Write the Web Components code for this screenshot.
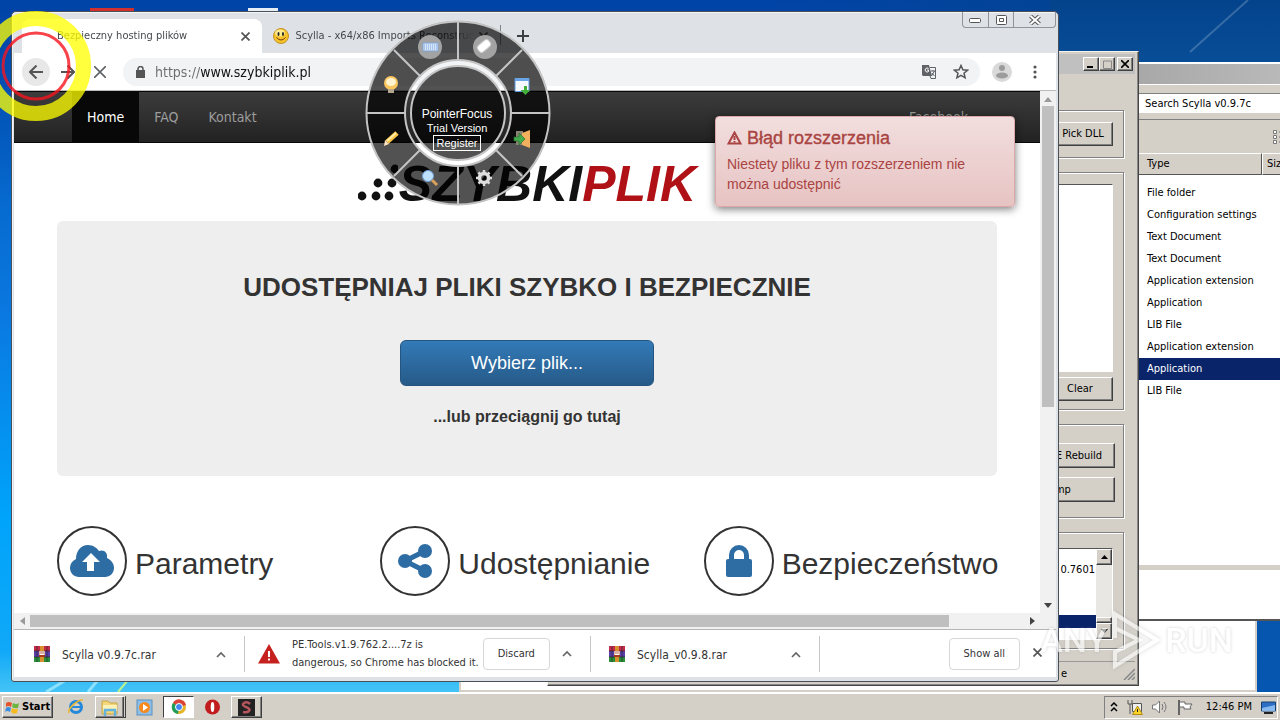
<!DOCTYPE html>
<html lang="pl">
<head>
<meta charset="utf-8">
<meta name="viewport" content="width=device-width, initial-scale=1">
<title>Bezpieczny hosting plików</title>
<style>
	html, body{ height: 100%; margin: 0; overflow: hidden; }
	body{
		--ui: "DejaVu Sans Condensed", "DejaVu Sans", sans-serif;
		--web: "Liberation Sans", Arial, sans-serif;
		--face: #d4d0c8;
		font: 11px/14px var(--ui);
		color: #000;
	}
</style>
</head>
<body>
<desk-top>
	<back-window></back-window>
	<explorer-window></explorer-window>
	<scylla-window></scylla-window>
	<browser-window>
		<browser-tab slot="tabs" active>Bezpieczny hosting plików</browser-tab>
		<browser-tab slot="tabs">Scylla - x64/x86 Imports Reconstruction</browser-tab>
		<host-page></host-page>
		<download-item slot="shelf" icon="rar">Scylla v0.9.7c.rar</download-item>
		<download-item slot="shelf" icon="warn" wide>PE.Tools.v1.9.762.2....7z is<br>dangerous, so Chrome has blocked it.</download-item>
		<download-item slot="shelf" icon="rar">Scylla_v0.9.8.rar</download-item>
	</browser-window>
	<radial-menu></radial-menu>
	<pointer-halo></pointer-halo>
	<water-mark></water-mark>
	<task-bar slot="bar"></task-bar>
</desk-top>

<script>
const define = (name, html, setup) => {
	customElements.define(name, class extends HTMLElement{
		constructor(){
			super();
			this.attachShadow({mode:'open'}).innerHTML = html;
		}
		connectedCallback(){ if(setup) setup(this, this.shadowRoot); }
	});
};

const ICONS = {
	rar: `<svg width="16" height="16" viewBox="0 0 16 16"><path fill="#c22b4a" d="M0 0h16v5H0z"/><path fill="#5b3fa8" d="M0 5h16v6H0z"/><path fill="#2a8f3a" d="M0 11h16v5H0z"/><path stroke="#222" stroke-width=".6" d="M0 5h16M0 11h16M3 0v16M13 0v16"/><path fill="#d8902c" d="M6 0h4v16H6z"/><path fill="#a33a1c" d="M5 5h6v6H5z"/><path stroke="#fff" stroke-width="1.2" fill="none" d="M6 5v3.500h4V5M8 5v3"/></svg>`,
	warn: `<svg width="22" height="20" viewBox="0 0 22 20"><path fill="#c5221f" d="M11 0l11 19.500H0z"/><path fill="#fff" d="M10 7h2v6h-2zM10 14.500h2v2h-2z"/></svg>`,
	up: `<svg width="10" height="7" viewBox="0 0 10 7"><path fill="none" stroke="#666" stroke-width="1.700" d="M1 6l4-4 4 4"/></svg>`,
	close: `<svg width="9" height="9" viewBox="0 0 9 9"><path stroke="#555" stroke-width="1.700" d="M.5.5l8 8M8.500.5l-8 8"/></svg>`,
	cloud: `<svg width="44" height="32" viewBox="0 0 44 32"><path fill="#2e6da4" d="M9 32C4 32 0 28 0 23c0-4 2-7 6-9C6 6 11 0 18 0c5 0 9 3 11 6 5-2 9 2 8 7 4 2 7 5 7 10s-4 9-9 9z"/><path fill="#fff" d="M21 8l9 9h-6v9h-7v-9h-5z"/></svg>`,
	share: `<svg width="34" height="34" viewBox="0 0 34 34"><g fill="#2e6da4"><circle cx="7" cy="17" r="7"/><circle cx="27" cy="7" r="7"/><circle cx="27" cy="27" r="7"/></g><path stroke="#2e6da4" stroke-width="5" fill="none" d="M27 7L7 17l20 10"/></svg>`,
	lock: `<svg width="26" height="32" viewBox="0 0 26 32"><rect y="14" width="26" height="18" rx="2" fill="#2e6da4"/><path fill="none" stroke="#2e6da4" stroke-width="5" d="M5.500 15V10a7.500 7.500 0 0 1 15 0v5"/></svg>`
};

define('desk-top', `
	<style>
		:host{ display: flex; flex-direction: column; height: 100vh; overflow: hidden; }
		.space{
			position: relative;
			flex: 1;
			background:
				linear-gradient(90deg, #0000 0, #0000 60%, #064389 100%) top / 100% 70px no-repeat,
				linear-gradient(180deg, #003a9f99 0, #0000 200px),
				linear-gradient(180deg, #0050b0 0, #0a78e0 45%, #00a4fb 75%, #10a8f8 94%, #45c4f5 100%);
		}
		.right{ position: absolute; right: 0; top: 0; width: 230px; height: 100%; background: linear-gradient(180deg, #03438c 0, #0a519b 12%, #0556b0 100%); }
		svg{ position: absolute; left: 0; top: 0; width: 100%; height: 100%; }
	</style>
	<div class="space">
		<div class="right"></div>
		<svg>
			<rect x="90" y="8" width="44" height="4" fill="#d2302c"/>
			<rect x="248" y="8" width="30" height="4" fill="#e8eef5"/>
			<path stroke="#fff" stroke-opacity=".2" stroke-width="2" d="M1248 0L1190 52"/>
			<path stroke="#dff" stroke-opacity=".5" stroke-width="3" d="M46 692l20-12M88 692l10-12"/>
			<path stroke="#df7" stroke-opacity=".8" stroke-width="2" d="M118 692l10-12"/>
		</svg>
		<slot></slot>
	</div>
	<slot name="bar"></slot>
`);

define('back-window', `
	<style>
		:host{
			position: absolute; left: 459px; right: 23px; top: 90px; bottom: 0;
			box-sizing: border-box;
			background: #fff;
			border: solid #d4d0c8;
			border-width: 0 2px 2px 2px;
		}
	</style>
`);

define('explorer-window', `
	<style>
		:host{
			position: absolute; right: -60px; top: 62px; bottom: 71px; width: 202px;
			box-sizing: border-box;
			display: flex; flex-direction: column;
			background: var(--face);
			border-top: 2px solid #fff;
			border-bottom: 2px solid #555;
		}
		.title{ height: 20px; background: linear-gradient(90deg, #a8a8a8, #c0c0c0); }
		.search{ padding: 8px 0 6px; border-top: 1px solid #fff; }
		input{
			width: 100%; height: 20px; box-sizing: border-box;
			border: 1px solid #808080; border-bottom-color: #fff;
			padding: 0 6px;
			font: inherit;
		}
		input::placeholder{ color: #000; opacity: 1; }
		.tools{ height: 33px; border-top: 1px solid #808080; display: flex; align-items: center; justify-content: end; padding-right: 57px; }
		.list{ flex: 1; background: #fff; overflow: hidden; }
		table{ border-spacing: 0; width: 100%; table-layout: fixed; }
		th{
			height: 22px; box-sizing: border-box; padding: 0 5px 0 8px;
			font-weight: normal; text-align: left;
			background: var(--face);
			border: 1px solid; border-color: #fff #555 #555 #fff;
		}
		th + th{ padding-left: 4px; }
		td{ height: 22px; padding: 0 9px; white-space: nowrap; }
		.gap td{ height: 7px; padding: 0; }
		.on td{ background: #0a246a; color: #fff; }
		.info{ height: 49px; border-top: 5px solid var(--face); background: #fff; }
	</style>
	<div class="title"></div>
	<div class="search"><input type="search" placeholder="Search Scylla v0.9.7c" aria-label="Search"></div>
	<div class="tools">
		<svg width="10" height="14"><path fill="#fff" stroke="#777" d="M.5.5h3v3h-3zM.5 5.500h3v3h-3zM.5 10.500h3v3h-3z"/><path stroke="#777" d="M6 2h4M6 7h4M6 12h4"/></svg>
	</div>
	<div class="list">
		<table>
			<colgroup><col width="124"><col></colgroup>
			<thead><tr><th>Type</th><th>Size</th></tr></thead>
			<tbody><tr class="gap"><td colspan="2"></td></tr></tbody>
		</table>
	</div>
	<div class="info"></div>
`, (el, root) => {
	const types = ['File folder','Configuration settings','Text Document','Text Document','Application extension','Application','LIB File','Application extension','Application','LIB File'];
	root.querySelector('tbody').insertAdjacentHTML('beforeend', types.map((t, i) =>
		`<tr${i === 8 ? ' class="on"' : ''}><td>${t}</td><td></td></tr>`).join(''));
});

define('scylla-window', `
	<style>
		:host{
			position: absolute; left: 547px; right: 141px; top: 51px; bottom: 6px;
			box-sizing: border-box;
			display: flex; flex-direction: column;
			background: var(--face);
			border: 1px solid; border-color: #f4f2ee #444 #444 #f4f2ee;
			box-shadow: inset -1px -1px #888;
		}
		.title{ margin: 2px 3px 0; height: 20px; display: flex; justify-content: end; align-items: center; background: #c0c0c0; }
		.title button{ width: 16px; height: 14px; padding: 0; display: grid; place-items: center; }
		.title button:last-child{ margin: 0 2px; }
		button{
			font: inherit;
			box-sizing: border-box;
			background: var(--face);
			border: 1px solid; border-color: #fff #404040 #404040 #fff;
			box-shadow: inset -1px -1px #808080;
		}
		section{
			box-sizing: border-box;
			margin: 0 14px 14px;
			border: 1px solid #808080;
			box-shadow: 1px 1px #fff, inset 1px 1px #fff;
			display: flex; flex-direction: column; align-items: flex-end;
			gap: 5px;
			padding: 11px 10px 8px;
		}
		.pick{ margin-top: 36px; height: 48px; }
		.pick button{ width: 60px; height: 24px; padding: 0; }
		.imports{ height: 238px; }
		.list{ align-self: stretch; flex: 1; background: #fff; border: 1px solid #555; border-color: #555 #fff #fff #555; }
		.imports button{ width: 66px; height: 24px; }
		.dump{ height: 94px; gap: 9px; padding: 18px 8px 0; }
		.dump button{ height: 25px; width: 78px; }
		.dump button:last-child{ width: 108px; padding-right: 16px; }
		.log{ height: 117px; margin-bottom: 12px; padding-top: 15px; }
		.rows{ display: flex; }
		.rows div:first-child{ flex: 1; text-align: right; }
		.lines p{ margin: 0; height: 13px; padding-right: 1px; }
		.lines p.on{ background: #0a246a; }
		.lines{ padding-top: 14px; }
		.bar{ width: 16px; background: #e9e7e3; display: flex; flex-direction: column; }
		.bar i{ flex: 1; }
		.bar button{ height: 16px; width: 16px; padding: 0; display: grid; place-items: center; }
		.bar .thumb{ height: 6px; }
		.status{ flex: 1; border-top: 1px solid #999; margin: 0 3px; display: flex; justify-content: end; align-items: center; gap: 56px; }
	</style>
	<div class="title">
		<button aria-label="Minimize"><svg width="8" height="8"><path stroke="#000" stroke-width="2" d="M0 7h6"/></svg></button>
		<button aria-label="Maximize"><svg width="9" height="9"><path fill="none" stroke="#888" d="M.5 1h8v7.500h-8z"/></svg></button>
		<button aria-label="Close"><svg width="8" height="8"><path stroke="#000" stroke-width="1.600" d="M0 0l8 8M8 0L0 8"/></svg></button>
	</div>
	<section class="pick"><button>Pick DLL</button></section>
	<section class="imports"><div class="list"></div><button>Clear</button></section>
	<section class="dump"><button>PE Rebuild</button><button>Dump</button></section>
	<section class="log">
		<div class="list rows">
			<div class="lines"><p>0.7601</p><p></p><p></p><p></p><p class="on"></p></div>
			<div class="bar">
				<button aria-label="Up"><svg width="7" height="4"><path d="M0 4l3.500-4L7 4z"/></svg></button>
				<i></i>
				<button class="thumb" aria-label="Scroll"></button>
				<button aria-label="Down"><svg width="7" height="4"><path d="M0 0l3.500 4L7 0z"/></svg></button>
			</div>
		</div>
	</section>
	<div class="status"><span>e</span><svg width="12" height="12"><path stroke="#888" stroke-width="1.500" d="M1 12L12 1M5 12l7-7M9 12l3-3"/></svg></div>
`);

define('browser-window', `
	<style>
		:host{
			position: absolute; left: 11px; right: 221px; top: 11px; bottom: 10px;
			box-sizing: border-box;
			display: flex; flex-direction: column;
			padding: 0 2px 4px;
			background: #dee1e6;
			border: 1px solid #4a5058;
			border-radius: 5px 5px 3px 3px;
			box-shadow: inset 1px 1px #f3f5f7;
		}
		button{ border: 0; padding: 0; background: none; font: inherit; color: inherit; }
		.strip{ display: flex; height: 41px; padding-left: 8px; align-items: flex-end; }
		.tabs{ display: flex; flex: 0 1 479px; min-width: 0; height: 34px; }
		.add{ margin: 0 0 11px 16px; display: flex; }
		.caption{ margin-left: auto; align-self: flex-start; display: flex; border: 1px solid #8d949c; border-top: 0; border-radius: 0 0 4px 4px; }
		.caption button{ width: 25px; height: 15px; display: grid; place-items: center; }
		.caption button + button{ border-left: 1px solid #8d949c; }
		.caption button:last-child{ width: 42px; }
		.bar{ display: flex; align-items: center; height: 37px; padding: 0 13px 0 8px; background: #fff; border-bottom: 1px solid #b8babd; }
		.bar > button{ width: 28px; height: 28px; margin-right: 4px; border-radius: 50%; display: grid; place-items: center; flex: none; }
		.bar .back{ background: #e8e8e8; }
		.url{ flex: 1; display: flex; align-items: center; height: 28px; margin: 0 12px 0 5px; padding: 0 11px 0 13px; border-radius: 14px; background: #f1f3f4; }
		.url svg{ flex: none; }
		.url input{
			flex: 1; min-width: 0; border: 0; outline: 0; margin-left: 10px; padding: 0;
			font: 14px/20px var(--ui);
			background: linear-gradient(90deg, #6a6d70 46px, #111 46px);
			-webkit-background-clip: text; background-clip: text;
			color: transparent;
		}
		.url svg + svg{ margin-left: 17px; }
		.view{ flex: 1; min-height: 0; display: grid; grid-template: minmax(0, 1fr) 16px / minmax(0, 1fr) 16px; background: #f1f1f1; }
		.page{ background: #fff; overflow: hidden; }
		.sv, .sh{ display: flex; align-items: center; }
		.sv{ flex-direction: column; padding: 6px 0 5px; }
		.sv i{ flex: 0 0 59%; margin: 4px 0 auto; width: 12px; background: #bfbfbf; }
		.sh{ padding: 0 5px 0 6px; }
		.sh i{ flex: 0 0 90.500%; margin: 0 auto 0 5px; height: 12px; background: #bfbfbf; }
		.shelf{ display: flex; align-items: center; height: 47px; padding-left: 2px; background: #fff; border-top: 1px solid #b5b5b5; }
		.all{ margin-left: auto; height: 32px; padding: 0 14px; border: 1px solid #d5d7da; border-radius: 4px; color: #333; }
		.shut{ margin: 0 14px 0 13px; }
	</style>
	<div class="strip">
		<div class="tabs"><slot name="tabs"></slot></div>
		<button class="add" aria-label="New tab"><svg width="12" height="12"><path stroke="#3c4043" stroke-width="2" d="M6 0v12M0 6h12"/></svg></button>
		<div class="caption">
			<button aria-label="Minimize"><svg width="13" height="7"><rect x=".5" y="2.500" width="11" height="4" rx="1" fill="#fff" stroke="#555"/></svg></button>
			<button aria-label="Maximize"><svg width="11" height="10"><rect x=".5" y=".5" width="10" height="9" rx="1" fill="#fff" stroke="#555"/><path fill="none" stroke="#555" d="M3.500 3.500h4v3h-4z"/></svg></button>
			<button aria-label="Close"><svg width="12" height="10"><path stroke="#555" stroke-width="4" d="M1.500 1l9 8M10.500 1l-9 8"/><path stroke="#fff" stroke-width="2" d="M1.500 1l9 8M10.500 1l-9 8"/></svg></button>
		</div>
	</div>
	<div class="bar">
		<button class="back" aria-label="Back"><svg width="14" height="14"><path fill="none" stroke="#555" stroke-width="2" d="M14 7H1M7.500.5L1 7l6.500 6.500"/></svg></button>
		<button aria-label="Forward"><svg width="14" height="14"><path fill="none" stroke="#555" stroke-width="2" d="M0 7h13M6.500.5L13 7l-6.500 6.500"/></svg></button>
		<button aria-label="Stop"><svg width="12" height="12"><path stroke="#5f6368" stroke-width="1.600" d="M0 0l12 12M12 0L0 12"/></svg></button>
		<div class="url">
			<svg width="9" height="12"><path fill="#555" d="M0 4h9v8H0z"/><path fill="none" stroke="#555" stroke-width="1.500" d="M2 5V3a2.500 2.500 0 0 1 5 0v2"/></svg>
			<input value="https://www.szybkiplik.pl" aria-label="Address" spellcheck="false">
			<svg width="14" height="14"><path fill="#5f6368" d="M0 0h7l3 11H1L0 10z"/><path fill="none" stroke="#5f6368" d="M8 2.500h5.500v11H9L8 11"/><path fill="none" stroke="#fff" d="M6.500 3.500a2 2 0 1 0 0 3V5H5"/><path stroke="#5f6368" d="M9 6h4M11 5v1M12.500 6l-3 5M10 8l2.500 3"/></svg>
			<svg width="16" height="16" viewBox="0 0 16 16"><path fill="none" stroke="#555" stroke-width="1.500" d="M8 1.500l1.900 4.300 4.600.4-3.500 3 1.100 4.600L8 11.400l-4.100 2.400L5 9.200l-3.500-3 4.600-.4z"/></svg>
		</div>
		<svg width="20" height="20"><circle cx="10" cy="10" r="10" fill="#d9d9d9"/><circle cx="10" cy="6" r="3" fill="#9c9c9c"/><ellipse cx="10" cy="13.500" rx="6" ry="3" fill="#9c9c9c"/></svg>
		<svg width="31" height="14"><g fill="#555"><circle cx="23" cy="2" r="1.600"/><circle cx="23" cy="7" r="1.600"/><circle cx="23" cy="12" r="1.600"/></g></svg>
	</div>
	<div class="view">
		<div class="page"><slot></slot></div>
		<div class="sv">
			<svg width="8" height="5"><path fill="#999" d="M0 5l4-5 4 5z"/></svg><i></i><svg width="8" height="5"><path fill="#444" d="M0 0l4 5 4-5z"/></svg>
		</div>
		<div class="sh">
			<svg width="5" height="8"><path fill="#999" d="M5 0L0 4l5 4z"/></svg><i></i><svg width="5" height="8"><path fill="#444" d="M0 0l5 4-5 4z"/></svg>
		</div>
	</div>
	<div class="shelf">
		<slot name="shelf"></slot>
		<button class="all">Show all</button>
		<button class="shut" aria-label="Close">${ICONS.close}</button>
	</div>
`);

define('browser-tab', `
	<style>
		:host{
			flex: 1 1 0; min-width: 0;
			display: flex; align-items: center;
			padding: 0 12px 0 11px;
			color: #45494d;
			border-right: 1px solid #80868b;
			border-image: linear-gradient(#0000 20%, #80868b 20%, #80868b 75%, #0000 75%) 1;
		}
		:host([active]){ background: #fff; border: 0; border-radius: 8px 8px 0 0; padding-left: 12px; }
		svg{ flex: none; }
		.face{ margin-right: 7px; }
		:host([active]) .face{ visibility: hidden; }
		.label{ flex: 1; overflow: hidden; white-space: nowrap; -webkit-mask: linear-gradient(90deg, #000 85%, #0000); mask: linear-gradient(90deg, #000 85%, #0000); }
		button{ border: 0; padding: 0; margin-left: 4px; background: none; display: flex; }
	</style>
	<svg class="face" width="16" height="16"><circle cx="8" cy="8" r="7.500" fill="#f5c32c" stroke="#c4912a"/><ellipse cx="7" cy="5" rx="5" ry="3.500" fill="#fde98e"/><ellipse cx="5.500" cy="6" rx="1" ry="2" fill="#222"/><ellipse cx="10" cy="6" rx="1" ry="2" fill="#222"/><path fill="none" stroke="#7a3b10" d="M3.500 9.500q4.500 5 9 0"/></svg>
	<span class="label"><slot></slot></span>
	<button aria-label="Close tab">${ICONS.close}</button>
`);

define('download-item', `
	<style>
		:host{ display: flex; align-items: center; flex: 0 0 229px; height: 36px; box-sizing: border-box; padding: 0 18px; border-right: 1px solid #c6c6c6; color: #333; font-size: 12px; line-height: 16px; }
		:host([wide]){ flex-basis: 346px; padding-left: 13px; font-size: 11px; line-height: 18px; }
		.icon{ display: flex; margin-right: 12px; }
		button{ border: 0; padding: 0; background: none; font: inherit; color: inherit; }
		.discard{ display: none; flex: none; height: 32px; padding: 0 14px; margin-left: 4px; border: 1px solid #d5d7da; border-radius: 4px; line-height: 14px; }
		:host([wide]) .discard{ display: block; }
		.more{ margin-left: auto; }
		span{ white-space: nowrap; padding-top: 2px; }
		:host([wide]) span{ padding: 0; }
	</style>
	<div class="icon"></div>
	<span><slot></slot></span>
	<button class="discard">Discard</button>
	<button class="more" aria-label="More">${ICONS.up}</button>
`, (el, root) => { root.querySelector('.icon').innerHTML = ICONS[el.getAttribute('icon')]; });

define('host-page', `
	<style>
		:host{ display: block; position: relative; font: 14px/20px var(--web); color: #333; }
		nav{
			display: flex; align-items: center;
			height: 50px; padding: 0 57px 0 58px;
			background: linear-gradient(#3c3c3c, #222);
			border: solid #080808; border-width: 1px 0;
		}
		nav a{ padding: 15px; color: #9d9d9d; text-decoration: none; font-family: var(--ui); font-size: 14px; }
		nav a.on{ color: #fff; background: #080808; }
		nav a:last-child{ margin-left: auto; }
		.wrap{ max-width: 940px; margin: 0 auto; padding: 0 15px; }
		.logo{ display: flex; justify-content: center; align-items: flex-start; gap: 1px; margin: 14px 0 9px; font: italic bold 50px/55px var(--web); color: #111; }
		.logo b{ color: #b01116; }
		.drop{
			box-sizing: border-box; min-height: 255px; padding: 48px 20px;
			display: flex; flex-direction: column; align-items: center;
			background: #eee; border-radius: 6px;
		}
		h1{ margin: 0; font-size: 26px; line-height: 36px; font-weight: bold; }
		.drop button{
			width: 254px; height: 46px; margin: 35px 0 21px;
			border: 1px solid #245580; border-radius: 6px;
			background: linear-gradient(#337ab7, #265a88);
			color: #fff; font: 18px/24px var(--web);
		}
		.drop p{ margin: 0; font-size: 16px; font-weight: bold; }
		.features{ display: grid; grid-template-columns: repeat(3, 1fr); margin: 50px -15px 0; padding: 0; }
		aside{
			position: absolute; right: 25px; top: 25px; width: 300px;
			box-sizing: border-box; padding: 11px 11px 12px;
			color: #a94442;
			background: linear-gradient(#f2dede, #e7c3c3);
			border: 1px solid #dca7a7; border-radius: 4px;
			box-shadow: 0 2px 8px #0008;
		}
		aside h2{ margin: 0 0 6px; display: flex; align-items: center; gap: 5px; font-size: 18px; line-height: 20px; font-weight: normal; -webkit-text-stroke: thin #a94442; }
		aside p{ margin: 0; }
	</style>
	<nav>
		<a class="on" href="#home">Home</a><a href="#faq">FAQ</a><a href="#kontakt">Kontakt</a><a href="#facebook">Facebook</a>
	</nav>
	<div class="wrap">
		<div class="logo">
			<svg width="40" height="44"><g fill="#111"><circle cx="4" cy="39" r="4.400"/><circle cx="18" cy="39" r="4.400"/><circle cx="31" cy="39" r="4.400"/><circle cx="20" cy="26" r="4.400"/><circle cx="34" cy="26" r="4.400"/><circle cx="37" cy="12" r="4.400"/></g></svg>
			<span>SZYBKI<b>PLIK</b></span>
		</div>
		<div class="drop">
			<h1>UDOSTĘPNIAJ PLIKI SZYBKO I BEZPIECZNIE</h1>
			<button>Wybierz plik...</button>
			<p>...lub przeciągnij go tutaj</p>
		</div>
		<div class="features">
			<feature-item icon="cloud">Parametry</feature-item>
			<feature-item icon="share">Udostępnianie</feature-item>
			<feature-item icon="lock">Bezpieczeństwo</feature-item>
		</div>
	</div>
	<aside role="alert">
		<h2><svg width="15" height="14" viewBox="0 0 15 14"><path fill="none" stroke="#a94442" stroke-width="2" d="M7.500 1.500l6 11h-12z"/><path fill="#a94442" d="M6.500 5h2v4h-2zM6.500 10h2v1.500h-2z"/></svg>Błąd rozszerzenia</h2>
		<p>Niestety pliku z tym rozszerzeniem nie można udostępnić</p>
	</aside>
`);

define('feature-item', `
	<style>
		:host{ display: flex; align-items: center; gap: 8px; padding-left: 15px; font: 30px/36px var(--web); color: #333; }
		.ring{ flex: none; width: 66px; height: 66px; border: 2px solid #333; border-radius: 50%; display: grid; place-items: center; }
		h3{ margin: 6px 0 0; font: inherit; }
	</style>
	<div class="ring"></div>
	<h3><slot></slot></h3>
`, (el, root) => { root.querySelector('.ring').innerHTML = ICONS[el.getAttribute('icon')]; });

define('radial-menu', `
	<style>
		:host{ position: absolute; left: 365px; top: 20px; width: 186px; height: 186px; display: grid; color: #fff; }
		:host > *, svg{ grid-area: 1 / 1; }
		.hub{ grid-area: 1 / 1; display: flex; flex-direction: column; align-items: center; padding: 87px 2px 0 0; font: 11px/14px var(--web); }
		.hub .name{ font-size: 12px; }
		button{ height: 16px; border: 1px solid #fff; background: none; color: #fff; font: 11px/14px var(--web); padding: 0 3px; }
	</style>
	<svg width="186" height="186" viewBox="-93 -93 186 186">
		<circle r="72.500" fill="none" stroke="#000" stroke-opacity=".68" stroke-width="39"/>
		<circle r="47" fill="#000" fill-opacity=".68"/>
		<g fill="none" stroke="#c4c4c4" stroke-width="2">
			<circle r="91.500"/><circle r="53"/><circle r="47"/>
			<path d="M0-92V-53M0 92V53M-92 0H-53M92 0H53M-64-63L-38-37M64-63L38-37M-64 63L-38 37M64 63L38 37"/>
		</g>
		<g fill="#a3a3a3"><circle cx="-28" cy="-66" r="12"/><circle cx="27" cy="-66" r="12"/></g>
		<path fill="#d5e6fa" stroke="#7ea4d8" d="M-35-70h15v8h-15z"/><path stroke="#7ea4d8" stroke-dasharray="1 1" d="M-34-68h13M-34-66h13M-34-64h13"/>
		<rect x="-7" y="-4" width="14" height="8" rx="3" fill="#fff" stroke="#ccc" transform="translate(26 -67) rotate(-40)"/>
		<circle cx="-67" cy="-30" r="7" fill="#fcc65e"/><ellipse cx="-67" cy="-31" rx="5" ry="4" fill="#fff3cf"/><path fill="#b5a78c" d="M-70-24h6v4h-6z"/>
		<path fill="#f4f9ff" stroke="#5d97d8" d="M57-34.500h14v13H57z"/><path fill="#6aa5e5" d="M57-35h14v3H57z"/><path fill="#42b038" d="M66-27h3v4h3l-4.500 5-5-5H66z"/>
		<path stroke="#f9c440" stroke-width="5" d="M-61 20l-10 9"/><path stroke="#ffe9a6" stroke-width="2" d="M-62 20l-9 8"/><path fill="#fde3c0" d="M-69 31l-5 2 1-6z"/>
		<path fill="#8a8272" d="M58 18h7v14h-7z"/><path fill="#f0b05e" d="M64 20l8-3v18l-8-3z"/><path fill="#43ad4b" stroke="#236d2c" stroke-width=".7" d="M56 24h5v-4l6 6-6 6v-4h-5z"/>
		<circle cx="-30" cy="63" r="5.500" fill="#bfe0fc" stroke="#6e9fd6"/><path stroke="#d8a05b" stroke-width="3" d="M-26 67l5 5"/>
		<g transform="translate(26 65)"><circle r="4.500" fill="none" stroke="#ddd" stroke-width="3.500"/><path stroke="#ddd" stroke-width="2.500" d="M0-8v3M0 5v3M-8 0h3M5 0h3M-5.500-5.500l2 2M5.500-5.500l-2 2M-5.500 5.500l2-2M5.500 5.500l-2-2"/></g>
	</svg>
	<div class="hub">
		<span class="name">PointerFocus</span><span>Trial Version</span>
		<button>Register</button>
	</div>
`);

define('pointer-halo', `
	<style>
		:host{ position: absolute; left: -20px; top: 10px; pointer-events: none; }
		svg{ display: block; }
	</style>
	<svg width="112" height="112" viewBox="-56 -56 112 112">
		<circle r="47.500" fill="none" stroke="#ff0" stroke-opacity=".76" stroke-width="15"/>
		<circle r="33" fill="none" stroke="#f8141e" stroke-opacity=".8" stroke-width="3"/>
	</svg>
`);

define('water-mark', `
	<style>
		:host{ position: absolute; right: 47px; bottom: 22px; display: flex; align-items: center; gap: 2px; opacity: .65; color: #fff; font: 500 34px/60px Roboto, sans-serif; text-shadow: 0 0 3px #8889; pointer-events: none; }
		svg{ filter: drop-shadow(0 0 2px #8888); }
	</style>
	<span>ANY</span>
	<svg width="54" height="60" viewBox="0 0 54 60"><path fill="#fff3" stroke="#fff" stroke-width="4" d="M6 28V4l42 26L6 56V42l24-12L6 18"/></svg>
	<span>RUN</span>
`);

define('task-bar', `
	<style>
		:host{ display: flex; align-items: center; height: 28px; box-sizing: border-box; border-top: 2px solid #fff; background: var(--face); padding: 0 2px; }
		button{ height: 22px; padding: 0 3px; display: flex; align-items: center; gap: 2px; border: 1px solid #0000; background: none; font: inherit; }
		.start, .up{ border-color: #fff #404040 #404040 #fff; box-shadow: inset -1px -1px #808080; }
		.start{ font-weight: bold; margin-right: 8px; padding: 0 2px; }
		.items{ display: flex; gap: 3px; }
		.items button{ width: 31px; justify-content: center; }
		.up.many{ border-right: 3px double #404040; }
		.down{ background: #fff; border-color: #404040 #fff #fff #404040; }
		.tray{ margin-left: auto; height: 21px; display: flex; align-items: center; gap: 9px; padding: 0 1px 0 5px; border: 1px solid; border-color: #808080 #fff #fff #808080; }
		time{ margin-left: 4px; }
	</style>
	<button class="start"><svg width="15" height="16"><path fill="#e5532d" d="M1 4q3-2 6 0L6 8q-3-2-5 0z"/><path fill="#6cb33f" d="M8 4q3 2 6 0l-1 5q-3 1-6-1z"/><path fill="#3b8ede" d="M1 9q2-2 5 0l-1 4q-3-2-5 0z"/><path fill="#f8bb1e" d="M7 9q3 2 6 1l-1 4q-3 2-6-1z"/></svg>Start</button>
	<div class="items">
		<button aria-label="Internet Explorer"><svg width="17" height="16"><circle cx="8" cy="8" r="5.500" fill="none" stroke="#2588d8" stroke-width="3"/><path stroke="#2588d8" stroke-width="2" d="M4 8h9"/><path fill="none" stroke="#eab52f" stroke-width="1.500" d="M1 14C-1 10 10 0 15 1"/></svg></button>
		<button class="up many" aria-label="Explorer"><svg width="18" height="17"><path fill="#f3d679" stroke="#c9a442" d="M1 2h6l2 2h7v11H1z"/><path fill="#fdf2b5" d="M2 6h14v6H2z"/><path fill="none" stroke="#63b4dd" stroke-width="2.500" d="M4 17v-6h10v6"/></svg></button>
		<button aria-label="Media Player"><svg width="17" height="17"><rect x="1" y="1" width="15" height="15" fill="#8dbfe8" stroke="#5a8fc0"/><circle cx="8.500" cy="8.500" r="5.500" fill="#f58a1f"/><path fill="#fff" d="M7 5l5 3.500L7 12z"/></svg></button>
		<button class="down" aria-label="Chrome"><svg width="16" height="16"><circle cx="8" cy="8" r="7" fill="#e8b526"/><path fill="#dc4437" d="M8 8L2 4a7 7 0 0 1 13 2z"/><path fill="#1e9e58" d="M8 8L2 4a7 7 0 0 0 5 11z"/><circle cx="8" cy="8" r="3.500" fill="#4387f4" stroke="#fff"/></svg></button>
		<button aria-label="Opera"><svg width="15" height="16"><ellipse cx="7.500" cy="8" rx="7.500" ry="7.500" fill="#c11c1e"/><ellipse cx="7.500" cy="8" rx="1.800" ry="5" fill="#fff"/></svg></button>
		<button class="up" aria-label="Scylla"><svg width="17" height="17"><path fill="#222" d="M0 0h17v17H0z"/><path fill="none" stroke="#b5555c" stroke-width="2.500" d="M12 5Q9 2 6 4t2 4 3 4-6 1"/></svg></button>
	</div>
	<div class="tray">
		<svg width="8" height="10"><path fill="none" stroke="#000" stroke-width="1.500" d="M1 4l3-3 3 3M1 9l3-3 3 3"/></svg>
		<svg width="16" height="16"><path fill="#eee" stroke="#555" d="M5.500 4.500h9v8h-9z"/><path fill="none" stroke="#555" d="M1 1v4h4V1M3 5v10"/><path fill="#fbd42a" stroke="#b18c10" d="M10.500 7l5 8.500h-10z"/><path stroke="#222" d="M10.500 10v3"/></svg>
		<svg width="16" height="14"><path fill="#fff" stroke="#777" d="M.5 5h3l4-4v12l-4-4h-3z"/><path fill="none" stroke="#777" d="M10 4q2 3 0 6M12 2q4 5 0 10"/></svg>
		<svg width="16" height="15"><path fill="#fff" stroke="#666" d="M2 2h6v2h7l-2 3 1 2H7V7H2z"/><path stroke="#666" stroke-width="2" d="M2 0v15"/></svg>
		<time>12:46 PM</time>
		<svg width="15" height="13"><path fill="#2d6fc4" stroke="#16406f" d="M.5 1h14v9H.5z"/><path fill="#88b9ee" d="M1 7l13-3v6H1z"/><path fill="#222" d="M3 11h9v2H3z"/></svg>
	</div>
`);
</script>
</body>
</html>
